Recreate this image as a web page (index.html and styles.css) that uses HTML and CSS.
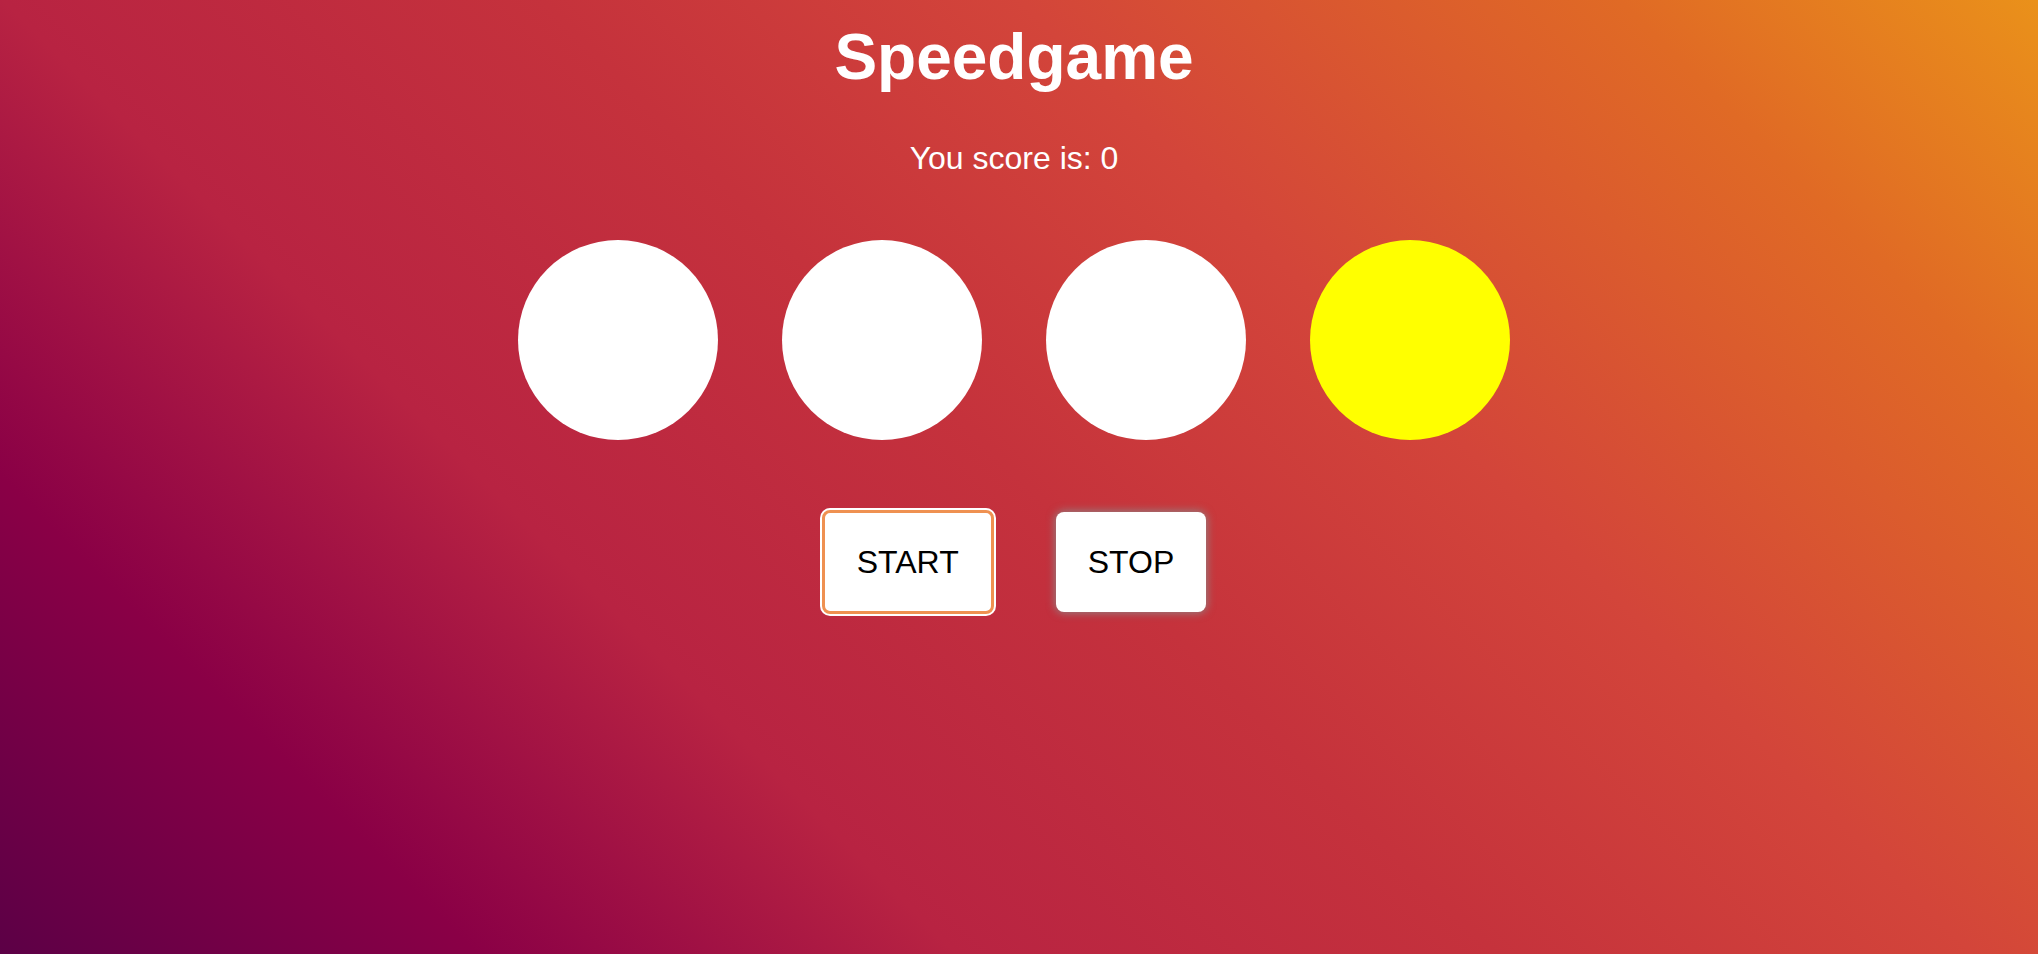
FILE: index.html
```html
<!DOCTYPE html>
<html lang="en">
<head>
<meta charset="utf-8">
<title>Speedgame</title>
<link rel="stylesheet" href="styles.css">
</head>
<body>
<main class="game">
  <h1 class="title">Speedgame</h1>
  <p class="score">You score is: <span class="score-value">0</span></p>
  <div class="circles">
    <div class="circle"></div>
    <div class="circle"></div>
    <div class="circle"></div>
    <div class="circle active"></div>
  </div>
  <div class="controls">
    <button class="btn btn-focused" type="button">START</button>
    <button class="btn btn-stop" type="button">STOP</button>
  </div>
</main>
</body>
</html>
```
FILE: styles.css
```css
html, body {
  margin: 0;
  padding: 0;
}

body {
  min-height: 100vh;
  font-family: "Liberation Sans", Arial, sans-serif;
  color: #fff;
  background: linear-gradient(45deg,
    #5c0046 0%,
    #8a0046 16%,
    #b82342 32%,
    #c5323c 50%,
    #d3453a 66%,
    #e06a25 86%,
    #ea911a 100%);
}

.game {
  display: flex;
  flex-direction: column;
  align-items: center;
  padding: 20px 10px 0 0;
}

.title {
  margin: 0;
  font-size: 64px;
  font-weight: bold;
  line-height: 74px;
}

.score {
  margin: 46px 0 0;
  font-size: 32px;
  line-height: 37px;
}

.circles {
  display: flex;
  gap: 64px;
  margin-top: 63px;
}

.circle {
  width: 200px;
  height: 200px;
  border-radius: 50%;
  background: #fff;
}

.circle.active {
  background: #ffff00;
}

.controls {
  display: flex;
  align-items: center;
  gap: 62px;
  margin-top: 70px;
  height: 104px;
}

.btn {
  height: 100px;
  padding: 0 32px;
  border: none;
  border-radius: 8px;
  background: #fff;
  color: #000;
  font-family: "Liberation Sans", Arial, sans-serif;
  font-size: 32px;
  cursor: pointer;
}

.btn-stop {
  box-shadow: 0 0 8px 1px rgba(140, 140, 140, 0.9);
}

.btn-focused {
  height: 104px;
  border: 3px solid #ef9151;
  box-shadow: 0 0 0 2px #fff;
}
```
